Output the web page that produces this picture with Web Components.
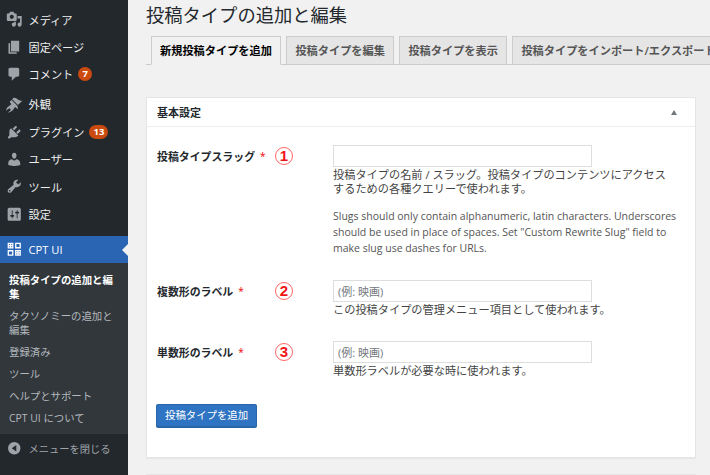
<!DOCTYPE html>
<html lang="ja">
<head>
<meta charset="utf-8">
<title>投稿タイプの追加と編集</title>
<style>
  html, body { margin: 0; height: 100%; overflow: hidden; }
  body {
    background: #f1f1f1;
    font-family: "Open Sans", "Noto Sans CJK JP", sans-serif;
    font-size: 11.2px;
    color: #444;
    display: flex;
    width: 710px;
    height: 475px;
  }
</style>
</head>
<body>
<wp-sidebar>
  <menu-item icon="media">メディア</menu-item>
  <menu-item icon="page">固定ページ</menu-item>
  <menu-item icon="comment" badge="7">コメント</menu-item>
  <menu-item icon="brush" class="gap">外観</menu-item>
  <menu-item icon="plugin" badge="13">プラグイン</menu-item>
  <menu-item icon="user">ユーザー</menu-item>
  <menu-item icon="tool">ツール</menu-item>
  <menu-item icon="settings">設定</menu-item>
  <menu-item icon="cpt" current>CPT UI</menu-item>
  <sub-menu>
    <a class="on">投稿タイプの追加と編集</a>
    <a>タクソノミーの追加と編集</a>
    <a>登録済み</a>
    <a>ツール</a>
    <a>ヘルプとサポート</a>
    <a>CPT UI について</a>
  </sub-menu>
  <menu-item icon="collapse" class="collapse">メニューを閉じる</menu-item>
</wp-sidebar>

<wp-main>
  <h1 slot="title">投稿タイプの追加と編集</h1>
  <tab-bar slot="tabs">
    <tab-link active>新規投稿タイプを追加</tab-link>
    <tab-link>投稿タイプを編集</tab-link>
    <tab-link>投稿タイプを表示</tab-link>
    <tab-link>投稿タイプをインポート/エクスポート</tab-link>
  </tab-bar>
  <post-box heading="基本設定">
    <form-row label="投稿タイプスラッグ" num="1" class="first">
      <span>投稿タイプの名前 / スラッグ。投稿タイプのコンテンツにアクセスするための各種クエリーで使われます。</span>
      <span slot="note">Slugs should only contain alphanumeric, latin characters. Underscores should be used in place of spaces. Set "Custom Rewrite Slug" field to make slug use dashes for URLs.</span>
    </form-row>
    <form-row label="複数形のラベル" num="2" placeholder="(例: 映画)" class="second">
      <span>この投稿タイプの管理メニュー項目として使われます。</span>
    </form-row>
    <form-row label="単数形のラベル" num="3" placeholder="(例: 映画)" class="third">
      <span>単数形ラベルが必要な時に使われます。</span>
    </form-row>
    <add-button>投稿タイプを追加</add-button>
  </post-box>
</wp-main>

<script>
const ICONS = {
  media: '<path d="M13 11V4c0-.55-.45-1-1-1h-1.67L9 1H5L3.67 3H2c-.55 0-1 .45-1 1v7c0 .55.45 1 1 1h10c.55 0 1-.45 1-1zM7 4.5c1.38 0 2.5 1.12 2.5 2.5S8.38 9.5 7 9.5 4.5 8.38 4.5 7 5.62 4.5 7 4.5zM14 6h5v10.5c0 1.38-1.12 2.5-2.5 2.5S14 17.88 14 16.5s1.12-2.5 2.5-2.5c.17 0 .34.02.5.05V9h-3V6zm-4 8.05V13h2v3.5c0 1.38-1.12 2.5-2.5 2.5S7 17.88 7 16.5 8.12 14 9.5 14c.17 0 .34.02.5.05z"/>',
  page: '<path d="M6 15V2h10v13H6zm-1 1h8v2H3V5h2v11z"/>',
  comment: '<path d="M5 2h9c1.1 0 2 .9 2 2v7c0 1.1-.9 2-2 2h-2l-5 5v-5H5c-1.1 0-2-.9-2-2V4c0-1.1.9-2 2-2z"/>',
  brush: '<path d="M14.48 11.06L7.41 3.99l1.5-1.5c.5-.56 2.3-.47 3.51.32 1.21.8 1.43 1.28 2.91 2.1 1.18.64 2.45 1.26 4.45.85zm-.71.71L6.7 4.7 4.93 6.47c-.39.39-.39 1.02 0 1.41l1.06 1.06c.39.39.39 1.03 0 1.42-.6.6-1.43 1.11-2.21 1.69-.35.26-.7.53-1.01.84C1.43 13.23.5 15.05 0 18l2.52-2.2c.8-.8 1.8-1.14 2.62-.32.82.82.48 1.82-.32 2.62L2 20c2.95-.5 4.77-1.43 6.11-2.77.31-.31.58-.66.84-1.01.58-.78 1.09-1.61 1.69-2.21.39-.39 1.03-.39 1.42 0l1.06 1.06c.39.39 1.02.39 1.41 0z"/>',
  plugin: '<path d="M13.11 4.36L9.87 7.6 8 5.73l3.24-3.24c.35-.34 1.05-.2 1.56.32.52.51.66 1.21.31 1.55zm-8 1.77l.91-1.12 9.01 9.01-1.19.84c-.71.71-2.63 1.16-3.82 1.16H6.14L4.9 17.26c-.59.59-1.54.59-2.12 0-.59-.58-.59-1.53 0-2.12l1.24-1.24v-3.88c0-1.13.4-3.19 1.09-3.89zm7.26 3.97l3.24-3.24c.34-.35 1.04-.21 1.55.31.52.51.66 1.21.31 1.55l-3.24 3.25z"/>',
  user: '<path d="M10 9.25c-2.27 0-2.73-3.44-2.73-3.44C7 4.02 7.82 2 9.97 2c2.16 0 2.98 2.02 2.71 3.81 0 0-.41 3.44-2.68 3.44zm0 2.57L12.72 10c2.39 0 4.52 2.33 4.52 4.53v2.49s-3.65 1.13-7.24 1.13c-3.65 0-7.24-1.13-7.24-1.13v-2.49c0-2.25 1.94-4.48 4.47-4.48z"/>',
  tool: '<path d="M16.68 9.77c-1.34 1.34-3.3 1.67-4.95.99l-5.41 6.52c-.99.99-2.59.99-3.58 0s-.99-2.59 0-3.57l6.52-5.42c-.68-1.65-.35-3.61.99-4.95 1.28-1.28 3.12-1.62 4.72-1.06l-2.89 2.89 2.82 2.82 2.86-2.87c.53 1.58.18 3.39-1.08 4.67zM3.81 16.21c.4.39 1.04.39 1.43 0 .4-.4.4-1.04 0-1.43-.39-.4-1.03-.4-1.43 0-.39.39-.39 1.03 0 1.43z"/>',
  settings: '<path fill-rule="evenodd" d="M18 16V4c0-1.1-.9-2-2-2H4c-1.1 0-2 .9-2 2v12c0 1.1.9 2 2 2h12c1.1 0 2-.9 2-2zM8 11h1c.55 0 1 .45 1 1s-.45 1-1 1H8v1.5c0 .28-.22.5-.5.5s-.5-.22-.5-.5V13H6c-.55 0-1-.45-1-1s.45-1 1-1h1V5.5c0-.28.22-.5.5-.5s.5.22.5.5V11zm5-2h-1c-.55 0-1-.45-1-1s.45-1 1-1h1V5.5c0-.28.22-.5.5-.5s.5.22.5.5V7h1c.55 0 1 .45 1 1s-.45 1-1 1h-1v5.5c0 .28-.22.5-.5.5s-.5-.22-.5-.5V9z"/>',
  cpt: '<path fill-rule="evenodd" d="M2 2h7v7H2zM3.5 3.5v1.2h1.2V3.5zm2.8 0v1.2h1.2V3.5zM3.5 6.3v1.2h1.2V6.3zm2.8 0v1.2h1.2V6.3zM11 2h7v7h-7zm1.6 1.6v3.8h3.8V3.6zM2 11h7v7H2zm1.6 1.6v3.8h3.8v-3.8zM11 11h7v7h-7zm1.5 1.5v1.2h1.2v-1.2zm2.8 0v1.2h1.2v-1.2zm-2.8 2.8v1.2h1.2v-1.2zm2.8 0v1.2h1.2v-1.2z"/>',
  collapse: '<path fill-rule="evenodd" d="M10 2.5a7.5 7.5 0 1 1 0 15 7.5 7.5 0 0 1 0-15zM12.5 6 7 10l5.5 4z"/>'
};

class WpSidebar extends HTMLElement {
  constructor() {
    super();
    this.attachShadow({ mode: 'open' });
    this.shadowRoot.innerHTML = `
    <style>
      :host {
        display: block;
        flex: 0 0 128px;
        width: 128px;
        height: 475px;
        padding-top: 6px;
        box-sizing: border-box;
        background: #23282d;
        overflow: hidden;
        font-family: "Open Sans", "Noto Sans CJK JP", sans-serif;
      }
    </style>
    <slot></slot>`;
  }
}

class MenuItem extends HTMLElement {
  constructor() {
    super();
    this.attachShadow({ mode: 'open' });
  }
  connectedCallback() {
    const badge = this.getAttribute('badge');
    const icon = ICONS[this.getAttribute('icon')] || '';
    this.shadowRoot.innerHTML = `
    <style>
      :host {
        display: flex;
        align-items: center;
        height: 27.4px;
        color: #eee;
        font-size: 11.2px;
        position: relative;
      }
      :host(.gap) { margin-top: 2.5px; }
      :host([current]) {
        height: 27px;
        margin-top: 8px;
        background: #2a65b4;
        color: #fff;
      }
      :host([current])::after {
        content: "";
        position: absolute;
        right: 0;
        top: 8px;
        border: 6px solid transparent;
        border-left-width: 0;
        border-right-color: #f1f1f1;
      }
      :host(.collapse) {
        height: 29px;
        background: #23282d;
        color: #a0a5aa;
        font-size: 10.25px;
      }
      svg {
        width: 16.5px;
        height: 16.5px;
        margin-left: 6px;
        margin-right: 6px;
        fill: #9ea3a8;
        flex: none;
      }
      :host([current]) svg { fill: #fff; }
      .badge {
        margin-left: 5px;
        min-width: 6px;
        height: 14px;
        line-height: 14px;
        padding: 0 4px;
        border-radius: 8px;
        background: #ca4a0f;
        color: #fff;
        font-size: 9.5px;
        font-weight: 700;
        text-align: center;
      }
    </style>
    <svg viewBox="0 0 20 20">${icon}</svg>
    <slot></slot>
    ${badge ? `<span class="badge">${badge}</span>` : ''}`;
  }
}

class SubMenu extends HTMLElement {
  constructor() {
    super();
    this.attachShadow({ mode: 'open' });
    this.shadowRoot.innerHTML = `
    <style>
      :host {
        display: flex;
        flex-direction: column;
        gap: 8px;
        padding: 10px 10px 9px 9px;
        background: #32373c;
        height: 152px;
      }
      ::slotted(a) {
        display: block;
        font-size: 10.4px;
        line-height: 14px;
        color: #b4b9be;
      }
      ::slotted(a.on) {
        color: #fff;
        font-weight: 700;
      }
    </style>
    <slot></slot>`;
  }
}

class WpMain extends HTMLElement {
  constructor() {
    super();
    this.attachShadow({ mode: 'open' });
    this.shadowRoot.innerHTML = `
    <style>
      :host {
        display: flex;
        flex-direction: column;
        flex: 1;
        min-width: 0;
        padding-left: 18px;
        padding-right: 14px;
        overflow: hidden;
      }
      ::slotted(h1) {
        flex: none;
        margin: 0;
        height: 36px;
        font-size: 18.3px;
        font-weight: 400;
        line-height: 29px;
        color: #23282d;
      }
      .below {
        flex: none;
        margin-top: 16px;
        border: 1px solid #e5e5e5;
        border-bottom: 0;
        height: 40px;
        background: #fff;
      }
    </style>
    <slot name="title"></slot>
    <slot name="tabs"></slot>
    <slot></slot>
    <div class="below"></div>`;
  }
}

class TabBar extends HTMLElement {
  constructor() {
    super();
    this.attachShadow({ mode: 'open' });
    this.shadowRoot.innerHTML = `
    <style>
      :host {
        display: flex;
        gap: 5.5px;
        box-sizing: border-box;
        height: 29px;
        padding-left: 5px;
        margin-right: -14px;
        border-bottom: 1px solid #ccc;
        flex: none;
      }
    </style>
    <slot></slot>`;
  }
}

class TabLink extends HTMLElement {
  constructor() {
    super();
    this.attachShadow({ mode: 'open' });
    this.shadowRoot.innerHTML = `
    <style>
      :host {
        display: block;
        flex: none;
        box-sizing: border-box;
        height: 29px;
        padding: 0 8px;
        line-height: 27px;
        border: 1px solid #ccc;
        background: #e5e5e5;
        color: #555;
        font-size: 11.2px;
        font-weight: 600;
        white-space: nowrap;
      }
      :host([active]) {
        background: #f1f1f1;
        border-bottom-color: #f1f1f1;
        color: #000;
      }
    </style>
    <slot></slot>`;
  }
}

class PostBox extends HTMLElement {
  constructor() {
    super();
    this.attachShadow({ mode: 'open' });
  }
  connectedCallback() {
    this.shadowRoot.innerHTML = `
    <style>
      :host {
        display: block;
        flex: none;
        box-sizing: border-box;
        height: 361px;
        margin-top: 32px;
        background: #fff;
        border: 1px solid #e5e5e5;
        box-shadow: 0 1px 1px rgba(0, 0, 0, .04);
      }
      header {
        display: flex;
        align-items: center;
        justify-content: space-between;
        height: 28px;
        padding: 0 18px 0 10px;
        border-bottom: 1px solid #eee;
        font-size: 11px;
        font-weight: 600;
        color: #23282d;
      }
      i {
        border: 3.5px solid transparent;
        border-top-width: 0;
        border-bottom: 5px solid #72777c;
      }
      .body { padding: 18px 9px 0; }
    </style>
    <header><span>${this.getAttribute('heading')}</span><i></i></header>
    <div class="body"><slot></slot></div>`;
  }
}

class FormRow extends HTMLElement {
  constructor() {
    super();
    this.attachShadow({ mode: 'open' });
  }
  connectedCallback() {
    const ph = this.getAttribute('placeholder') || '';
    this.shadowRoot.innerHTML = `
    <style>
      :host {
        display: grid;
        grid-template-columns: 177px 1fr;
        font-size: 11.2px;
        color: #444;
      }
      :host(.second) { margin-top: 24px; }
      :host(.third) { margin-top: 24px; }
      .label {
        display: flex;
        align-items: center;
        height: 22px;
        padding-left: 1px;
        font-size: 10.9px;
        color: #23282d;
        font-weight: 600;
        position: relative;
      }
      .label em {
        color: #e00;
        font-style: normal;
        margin-left: 5px;
        font-size: 10px;
        font-weight: 400;
      }
      /* annotation mark over the label column */
      .num {
        position: absolute;
        left: 119px;
        top: 2px;
        box-sizing: border-box;
        width: 18px;
        height: 18px;
        border: 1px solid #f66;
        border-radius: 50%;
        color: #f01414;
        font-size: 15px;
        font-weight: 700;
        line-height: 16px;
        text-align: center;
        font-family: "Liberation Sans", sans-serif;
      }
      input {
        display: block;
        box-sizing: border-box;
        width: 259px;
        height: 22px;
        margin: 0;
        padding: 0 4px;
        border: 1px solid #ddd;
        background: #fff;
        font: inherit;
        font-size: 11px;
      }
      input::placeholder { color: #72777c; opacity: 1; }
      .desc {
        width: 340px;
        line-height: 14px;
        margin-top: 1px;
      }
      ::slotted([slot=note]) {
        display: block;
        width: 350px;
        margin-top: 12px;
        font-size: 10.5px;
        line-height: 16px;
        color: #555;
      }
    </style>
    <div class="label">${this.getAttribute('label')}<em>*</em><span class="num">${this.getAttribute('num')}</span></div>
    <div>
      <input type="text" placeholder="${ph}">
      <div class="desc"><slot></slot></div>
      <slot name="note"></slot>
    </div>`;
  }
}

class AddButton extends HTMLElement {
  constructor() {
    super();
    this.attachShadow({ mode: 'open' });
    this.shadowRoot.innerHTML = `
    <style>
      :host {
        display: inline-block;
        box-sizing: border-box;
        height: 24px;
        margin-top: 26px;
        padding: 0 8px;
        line-height: 21px;
        font-size: 10.4px;
        color: #fff;
        background: #2f74c2;
        border: 1px solid #2a65a8;
        border-bottom-width: 2px;
        border-radius: 2px;
      }
    </style>
    <slot></slot>`;
  }
}

customElements.define('wp-sidebar', WpSidebar);
customElements.define('menu-item', MenuItem);
customElements.define('sub-menu', SubMenu);
customElements.define('wp-main', WpMain);
customElements.define('tab-bar', TabBar);
customElements.define('tab-link', TabLink);
customElements.define('post-box', PostBox);
customElements.define('form-row', FormRow);
customElements.define('add-button', AddButton);
</script>
</body>
</html>
